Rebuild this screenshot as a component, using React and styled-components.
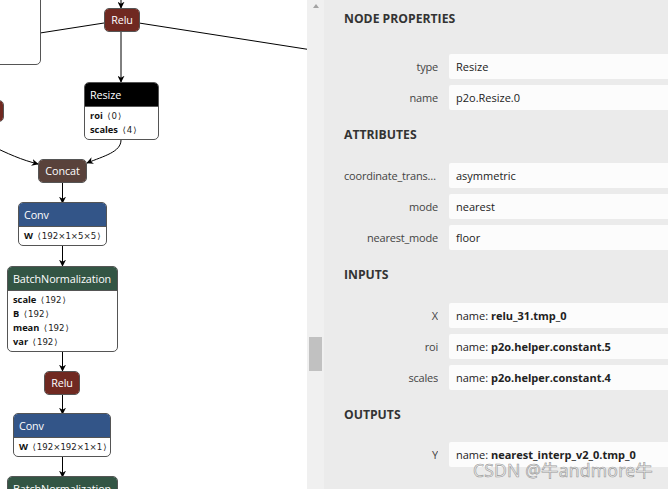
import React from 'react'
import styled, { createGlobalStyle } from 'styled-components'

const GlobalStyle = createGlobalStyle`
  html, body {
    margin: 0;
    padding: 0;
    overflow: hidden;
    background: #ffffff;
  }
`

const Page = styled.div`
  display: flex;
  width: 668px;
  height: 489px;
  overflow: hidden;
  position: relative;
  font-family: "Open Sans", "Noto Sans", sans-serif;
`

const Canvas = styled.div`
  position: relative;
  width: 307px;
  height: 489px;
  flex: none;
  background: #ffffff;
  overflow: hidden;
`

const Edges = styled.svg`
  position: absolute;
  left: 0;
  top: 0;
  width: 307px;
  height: 489px;
  overflow: visible;
`

const Node = styled.div`
  position: absolute;
  left: ${({ $x }) => $x}px;
  top: ${({ $y }) => $y}px;
  width: ${({ $w }) => $w}px;
  box-sizing: border-box;
  border: 1px solid #555;
  border-radius: 5px;
  background: #ffffff;
  overflow: hidden;
`

const Header = styled.div`
  height: ${({ $h }) => $h || 23}px;
  line-height: ${({ $h }) => $h || 23}px;
  padding: 0 5px;
  background: ${({ $color }) => $color};
  color: #ffffff;
  font-size: 10.8px;
  letter-spacing: -0.1px;
  white-space: nowrap;
  text-align: ${({ $center }) => ($center ? 'center' : 'left')};
  border-bottom: ${({ $single }) => ($single ? 'none' : '1px solid #555')};
`

const Body = styled.div`
  padding: 2px 6px 2px 5px;
  height: ${({ $h }) => ($h ? `${$h}px` : 'auto')};
`

const Attr = styled.div`
  font-size: 9.3px;
  line-height: 14px;
  color: #111;
  white-space: nowrap;
  b {
    font-weight: 700;
  }
  span {
    font-family: "DejaVu Sans", sans-serif;
    font-size: 8.6px;
    color: #222;
    margin-left: 2px;
  }
  i {
    font-style: normal;
    padding: 0 1px;
  }
`

const ScrollTrack = styled.div`
  width: 17px;
  flex: none;
  background: #f0f0f0;
  display: flex;
  flex-direction: column;
  align-items: center;
`

const UpArrow = styled.div`
  margin-top: 4px;
  width: 0;
  height: 0;
  border-left: 3.5px solid transparent;
  border-right: 3.5px solid transparent;
  border-bottom: 4px solid #a3a3a3;
`

const Thumb = styled.div`
  margin-top: ${({ $offset }) => $offset}px;
  width: 13px;
  height: 34px;
  background: #c1c1c1;
`

const Sidebar = styled.div`
  flex: 1;
  background: #ebebeb;
  padding: 11px 0 0 20px;
  overflow: hidden;
  color: #333;
`

const Heading = styled.div`
  font-size: 12.2px;
  font-weight: 700;
  line-height: 16px;
  color: #333;
  text-transform: uppercase;
  margin-top: ${({ $first }) => ($first ? 0 : 17)}px;
`

const List = styled.div`
  display: flex;
  flex-direction: column;
  gap: 6px;
  margin-top: ${({ $gap }) => $gap}px;
`

const Row = styled.div`
  display: flex;
  align-items: center;
  gap: 11px;
`

const Label = styled.div`
  width: 94px;
  flex: none;
  text-align: right;
  font-size: 11px;
  letter-spacing: -0.2px;
  color: #444;
  white-space: nowrap;
  overflow: hidden;
  text-overflow: ellipsis;
`

const Value = styled.div`
  flex: 1;
  height: 25px;
  line-height: 25px;
  margin-right: -6px;
  padding: 0 7px;
  background: #fcfcfc;
  border-radius: 2px;
  font-size: 11px;
  color: #222;
  white-space: nowrap;
  b {
    font-weight: 700;
  }
`

const Watermark = styled.div`
  position: absolute;
  right: 15px;
  bottom: 7px;
  font-family: "Noto Sans", "Noto Sans CJK SC", sans-serif;
  font-size: 17.5px;
  color: rgba(236, 236, 236, 0.85);
  -webkit-text-stroke: 0.6px rgba(120, 120, 120, 0.75);
  letter-spacing: 0.2px;
  pointer-events: none;
`

const RED = 'rgb(112, 41, 33)'
const BLUE = 'rgb(51, 85, 136)'
const GREEN = 'rgb(51, 85, 68)'
const BROWN = 'rgb(89, 66, 59)'

const Arrow = () => (
  <defs>
    <marker id="arrow" viewBox="0 0 10 10" refX="9" refY="5" markerWidth="7" markerHeight="7" markerUnits="userSpaceOnUse" orient="auto">
      <path d="M0 0 L10 5 L0 10 L3 5 Z" fill="#000" />
    </marker>
  </defs>
)

const edges = [
  { d: 'M121 -5 L121 8', arrow: true },
  { d: 'M104 23 L40 33' },
  { d: 'M139 23 L312 50' },
  { d: 'M121 32 L121 82', arrow: true },
  { d: 'M-12 144 C 8 154 22 160 38 164', arrow: true },
  { d: 'M121 140 C 121 152 104 156 87 163', arrow: true },
  { d: 'M62.5 183 L62.5 203', arrow: true },
  { d: 'M62.5 246 L62.5 266', arrow: true },
  { d: 'M62.5 351 L62.5 371', arrow: true },
  { d: 'M62.5 394 L62.5 414', arrow: true },
  { d: 'M62.5 457 L62.5 477', arrow: true },
]

const Tensor = ({ name, shape }) => (
  <Attr>
    <b>{name}</b> <span>⟨<i>{shape}</i>⟩</span>
  </Attr>
)

const Graph = () => (
  <Canvas>
    <Edges>
      <Arrow />
      {edges.map((e, i) => (
        <path key={i} d={e.d} stroke="#000" strokeWidth="1" fill="none" markerEnd={e.arrow ? 'url(#arrow)' : undefined} />
      ))}
    </Edges>

    <Node $x={-30} $y={-26} $w={71}>
      <Header $color={GREEN}>Conv</Header>
      <Body $h={61} />
    </Node>

    <Node $x={-30} $y={100} $w={34}>
      <Header $color={RED} $single $h={20} />
    </Node>

    <Node $x={104} $y={8} $w={36}>
      <Header $color={RED} $single $center $h={22}>Relu</Header>
    </Node>

    <Node $x={84} $y={82} $w={75}>
      <Header $color="#000">Resize</Header>
      <Body>
        <Tensor name="roi" shape="0" />
        <Tensor name="scales" shape="4" />
      </Body>
    </Node>

    <Node $x={38} $y={159} $w={49}>
      <Header $color={BROWN} $single $center $h={22}>Concat</Header>
    </Node>

    <Node $x={18} $y={202} $w={89}>
      <Header $color={BLUE}>Conv</Header>
      <Body>
        <Tensor name="W" shape="192×1×5×5" />
      </Body>
    </Node>

    <Node $x={7} $y={266} $w={111}>
      <Header $color={GREEN}>BatchNormalization</Header>
      <Body>
        <Tensor name="scale" shape="192" />
        <Tensor name="B" shape="192" />
        <Tensor name="mean" shape="192" />
        <Tensor name="var" shape="192" />
      </Body>
    </Node>

    <Node $x={44} $y={371} $w={36}>
      <Header $color={RED} $single $center $h={22}>Relu</Header>
    </Node>

    <Node $x={13} $y={413} $w={98}>
      <Header $color={BLUE}>Conv</Header>
      <Body>
        <Tensor name="W" shape="192×192×1×1" />
      </Body>
    </Node>

    <Node $x={7} $y={476} $w={111}>
      <Header $color={GREEN}>BatchNormalization</Header>
      <Body $h={20} />
    </Node>
  </Canvas>
)

const sections = [
  {
    title: 'Node Properties',
    gap: 27,
    rows: [
      { label: 'type', value: 'Resize' },
      { label: 'name', value: 'p2o.Resize.0' },
    ],
  },
  {
    title: 'Attributes',
    gap: 20,
    rows: [
      { label: 'coordinate_transformation_mode', value: 'asymmetric' },
      { label: 'mode', value: 'nearest' },
      { label: 'nearest_mode', value: 'floor' },
    ],
  },
  {
    title: 'Inputs',
    gap: 20,
    rows: [
      { label: 'X', name: 'relu_31.tmp_0' },
      { label: 'roi', name: 'p2o.helper.constant.5' },
      { label: 'scales', name: 'p2o.helper.constant.4' },
    ],
  },
  {
    title: 'Outputs',
    gap: 19,
    rows: [{ label: 'Y', name: 'nearest_interp_v2_0.tmp_0' }],
  },
]

const Properties = () => (
  <Sidebar>
    {sections.map((s, i) => (
      <div key={s.title}>
        <Heading $first={i === 0}>{s.title}</Heading>
        <List $gap={s.gap}>
          {s.rows.map((r) => (
            <Row key={r.label}>
              <Label>{r.label}</Label>
              <Value>
                {r.name ? (
                  <>
                    name: <b>{r.name}</b>
                  </>
                ) : (
                  r.value
                )}
              </Value>
            </Row>
          ))}
        </List>
      </div>
    ))}
  </Sidebar>
)

const App = () => {
  return (
    <>
      <GlobalStyle />
      <Page>
        <Graph />
        <ScrollTrack>
          <UpArrow />
          <Thumb $offset={329} />
        </ScrollTrack>
        <Properties />
        <Watermark>CSDN @牛andmore牛</Watermark>
      </Page>
    </>
  )
}

export default App
